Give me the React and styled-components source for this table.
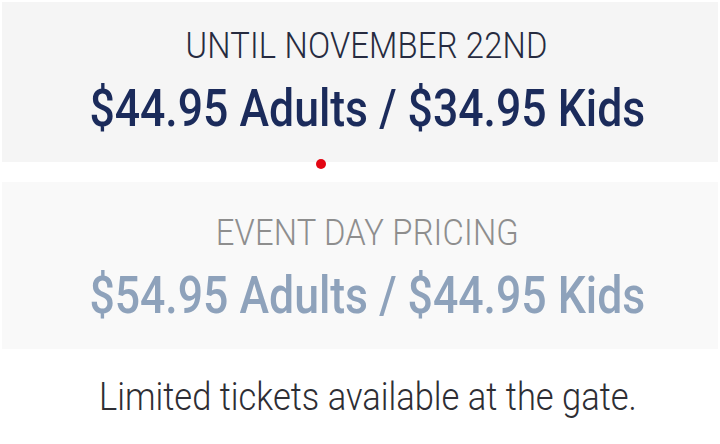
import React from "react";
import styled, { createGlobalStyle } from "styled-components";

const GlobalStyle = createGlobalStyle`
  html, body { margin: 0; padding: 0; background: #ffffff; }
  body { font-family: "Roboto", "Liberation Sans", sans-serif; }
`;

const Page = styled.div`
  position: relative;
  width: 720px;
  box-sizing: border-box;
  padding: 2px 2px 0;
  display: flex;
  flex-direction: column;
  gap: 20px;
`;

const Card = styled.section`
  background: ${(p) => p.$bg};
  padding: ${(p) => p.$top}px 0 24px 14px;
  display: flex;
  flex-direction: column;
  align-items: center;
  gap: 12px;
`;

const Label = styled.div`
  font-family: "Roboto", sans-serif;
  font-weight: 300;
  font-size: 37px;
  line-height: 44px;
  letter-spacing: 0.2px;
  color: ${(p) => p.$color};
  white-space: nowrap;
  transform: scaleX(0.885);
`;

const Price = styled.div`
  font-family: "Roboto", sans-serif;
  font-weight: 500;
  font-size: 52px;
  line-height: 58px;
  color: ${(p) => p.$color};
  white-space: nowrap;
  transform: scaleX(0.857);
`;

const Note = styled.p`
  margin: 5px 0 0;
  padding-left: 18px;
  text-align: center;
  font-family: "Roboto", sans-serif;
  font-weight: 300;
  font-size: 39px;
  line-height: 46px;
  color: #2e2e34;
  white-space: nowrap;
  transform: scaleX(0.884);
`;

const Dot = styled.span`
  position: absolute;
  left: 316px;
  top: 159px;
  width: 10px;
  height: 10px;
  border-radius: 50%;
  background: #e30613;
`;

const tiers = [
  {
    label: "UNTIL NOVEMBER 22ND",
    price: "$44.95 Adults / $34.95 Kids",
    bg: "#f5f5f5",
    top: 22,
    labelColor: "#262b40",
    priceColor: "#1b2b5b",
  },
  {
    label: "EVENT DAY PRICING",
    price: "$54.95 Adults / $44.95 Kids",
    bg: "#f9f9f9",
    top: 29,
    labelColor: "#8e8e8e",
    priceColor: "#8ea2bb",
  },
];

export default function App() {
  return (
    <>
      <GlobalStyle />
      <Page>
        {tiers.map((t) => (
          <Card key={t.label} $bg={t.bg} $top={t.top}>
            <Label $color={t.labelColor}>{t.label}</Label>
            <Price $color={t.priceColor}>{t.price}</Price>
          </Card>
        ))}
        <Note>Limited tickets available at the gate.</Note>
        <Dot />
      </Page>
    </>
  );
}
